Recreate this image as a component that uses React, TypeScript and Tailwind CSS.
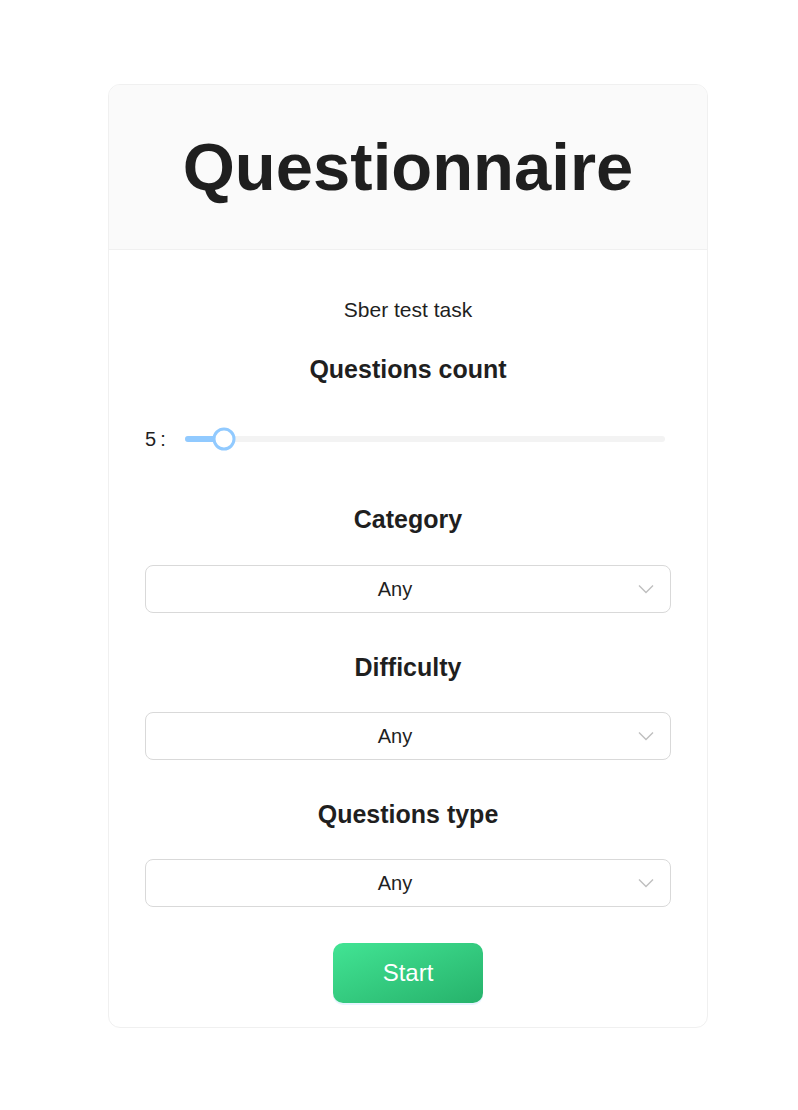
import { useState } from 'react';

const font = { fontFamily: '"Liberation Sans", Arial, sans-serif' };

function Chevron() {
    return (
        <svg width="16" height="16" viewBox="0 0 16 16" fill="none" className="text-[#bfbfbf]">
            <path d="M1 4.5 L8 11.5 L15 4.5" stroke="currentColor" strokeWidth="1.4" />
        </svg>
    );
}

function SelectBox({ value }: { value: string }) {
    return (
        <div className="relative flex items-center justify-center h-12 w-full border border-[#d9d9d9] rounded-lg bg-white">
            <span className="text-[20px] text-[#1f1f1f] pr-[26px]">{value}</span>
            <div className="absolute right-[16px] top-1/2 -translate-y-1/2 flex">
                <Chevron />
            </div>
        </div>
    );
}

function Heading({ children, className = '' }: { children: string; className?: string }) {
    return (
        <h2 className={`text-center text-[25px] leading-[30px] font-bold text-[#1f1f1f] ${className}`}>
            {children}
        </h2>
    );
}

export default function App() {
    const [count] = useState(5);
    const percent = 8.1;

    return (
        <div className="min-h-[1110px] bg-white pt-[84px]" style={font}>
            <div className="w-[600px] ml-[108px] border border-[#f0f0f0] rounded-xl overflow-hidden bg-white">
                {/* Header */}
                <div className="h-[165px] bg-[#fafafa] border-b border-[#f0f0f0] flex items-center justify-center">
                    <h1 className="text-[67px] leading-none font-bold text-[#1f1f1f] pb-[2px]">
                        Questionnaire
                    </h1>
                </div>

                {/* Body */}
                <div className="px-9 pt-[48px] pb-[24px]">
                    <p className="text-center text-[21px] leading-[24px] text-[#1f1f1f]">Sber test task</p>

                    <Heading className="mt-[32px]">Questions count</Heading>

                    <div className="mt-[43px] h-6 flex items-center">
                        <span className="text-[20px] text-[#1f1f1f] w-[40px] flex items-center">
                            {count}
                            <span className="ml-[4px]">:</span>
                        </span>
                        <div className="relative flex-1 h-6 mr-[6px]">
                            <div className="absolute left-0 right-0 top-1/2 -translate-y-1/2 h-[6px] rounded-full bg-[#f3f3f3]" />
                            <div
                                className="absolute left-0 top-1/2 -translate-y-1/2 h-[6px] rounded-full bg-[#91caff]"
                                style={{ width: `${percent}%` }}
                            />
                            <div
                                className="absolute top-1/2 -translate-y-1/2 -translate-x-1/2 size-[23px] rounded-full bg-white border-[3px] border-[#91caff]"
                                style={{ left: `${percent}%` }}
                            />
                        </div>
                    </div>

                    <Heading className="mt-[53px]">Category</Heading>
                    <div className="mt-[31px]">
                        <SelectBox value="Any" />
                    </div>

                    <Heading className="mt-[39px]">Difficulty</Heading>
                    <div className="mt-[30px]">
                        <SelectBox value="Any" />
                    </div>

                    <Heading className="mt-[39px]">Questions type</Heading>
                    <div className="mt-[30px]">
                        <SelectBox value="Any" />
                    </div>

                    <div className="mt-[36px] flex justify-center">
                        <button className="w-[150px] h-[60px] rounded-[10px] bg-gradient-to-br from-[#42e494] to-[#26b26b] text-white text-[24px] shadow-[0_2px_0_rgba(5,145,255,0.1)]">
                            Start
                        </button>
                    </div>
                </div>
            </div>
        </div>
    );
}
